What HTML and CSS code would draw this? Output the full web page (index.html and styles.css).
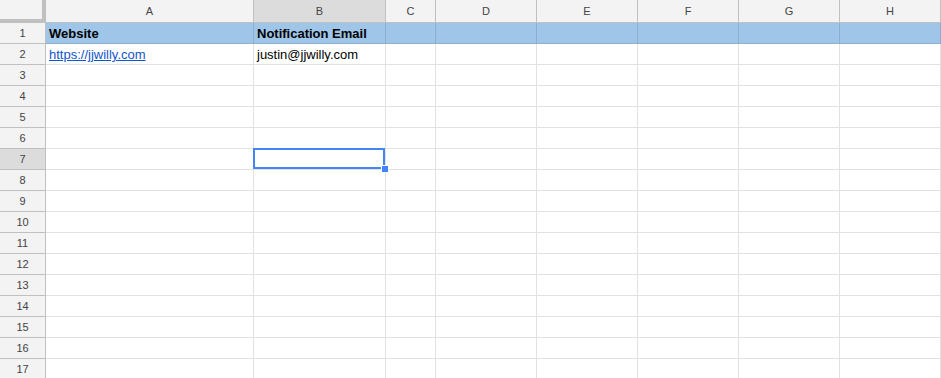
FILE: index.html
```html
<!DOCTYPE html>
<html lang="en">
<head>
  <meta charset="UTF-8" />
  <meta name="viewport" content="width=device-width, initial-scale=1.0"/>
  <title>Sheet1</title>

  <link rel="stylesheet" href="styles.css">
</head>
<body>
  <div class="sheet" id="sheet">
    <div class="corner"></div>
    <div class="col-head">A</div>
    <div class="col-head active">B</div>
    <div class="col-head">C</div>
    <div class="col-head">D</div>
    <div class="col-head">E</div>
    <div class="col-head">F</div>
    <div class="col-head">G</div>
    <div class="col-head">H</div>
  </div>

  <script>
    const SHEET = document.getElementById("sheet");
    const COLS = 8;
    const ROWS = 17;
    const SELECTED = { row: 7, col: 1 };

    // first rows hold the data, the rest stay empty
    const data = [
      [{ text: "Website", bold: true }, { text: "Notification Email", bold: true }],
      [{ text: "https://jjwilly.com", link: true }, { text: "justin@jjwilly.com" }]
    ];

    for (let r = 1; r <= ROWS; r++) {
      const head = document.createElement("div");
      head.className = "row-head";
      if (r === SELECTED.row) head.classList.add("active");
      head.textContent = r;
      SHEET.appendChild(head);

      for (let c = 0; c < COLS; c++) {
        const cell = document.createElement("div");
        cell.className = "cell";
        if (r === 1) cell.classList.add("title");

        const value = data[r - 1] && data[r - 1][c];
        if (value) {
          if (value.link) {
            const a = document.createElement("a");
            a.href = value.text;
            a.textContent = value.text;
            cell.appendChild(a);
          } else {
            cell.textContent = value.text;
          }
          if (value.bold) cell.classList.add("bold");
        }

        if (r === SELECTED.row && c === SELECTED.col) {
          const sel = document.createElement("div");
          sel.className = "selection";
          const handle = document.createElement("span");
          handle.className = "handle";
          sel.appendChild(handle);
          cell.appendChild(sel);
        }
        SHEET.appendChild(cell);
      }
    }
  </script>
</body>
</html>
```

FILE: styles.css
```css
body {
  margin: 0;
  background: #fff;
  font-family: "Liberation Sans", Arial, sans-serif;
  overflow: hidden;
}

.sheet {
  display: grid;
  grid-template-columns: 46px 208px 132px 50px 101px 101px 101px 101px 101px;
  grid-auto-rows: 21px;
  grid-template-rows: 23px;
  width: 941px;
}

.sheet > div {
  box-sizing: border-box;
}

.corner {
  background: #f3f3f3;
  border-right: 4px solid #c0c0c0;
  border-bottom: 4px solid #c0c0c0;
}

.col-head {
  background: #f3f3f3;
  border-right: 1px solid #c0c0c0;
  border-bottom: 1px solid #c0c0c0;
  color: #444;
  font-size: 11px;
  line-height: 22px;
  text-align: center;
}

.row-head {
  background: #f3f3f3;
  border-right: 1px solid #c0c0c0;
  border-bottom: 1px solid #c0c0c0;
  color: #444;
  font-size: 11px;
  line-height: 20px;
  text-align: center;
}

.col-head.active,
.row-head.active {
  background: #dcdcdc;
}

.cell {
  position: relative;
  border-right: 1px solid #e2e2e3;
  border-bottom: 1px solid #e2e2e3;
  padding: 1px 3px 0;
  font-size: 13px;
  line-height: 20px;
  color: #000;
  white-space: nowrap;
}

.cell.title {
  background: #9fc5e8;
  border-color: #8eaecb;
}

.bold {
  font-weight: bold;
}

.cell a {
  color: #1155cc;
  text-decoration: underline;
}

.selection {
  position: absolute;
  z-index: 2;
  top: -1px;
  left: -1px;
  right: 0;
  bottom: 0;
  border: 2px solid #4285f4;
}

.handle {
  position: absolute;
  right: -6px;
  bottom: -6px;
  width: 6px;
  height: 6px;
  background: #4285f4;
  border: 1px solid #fff;
}
```
